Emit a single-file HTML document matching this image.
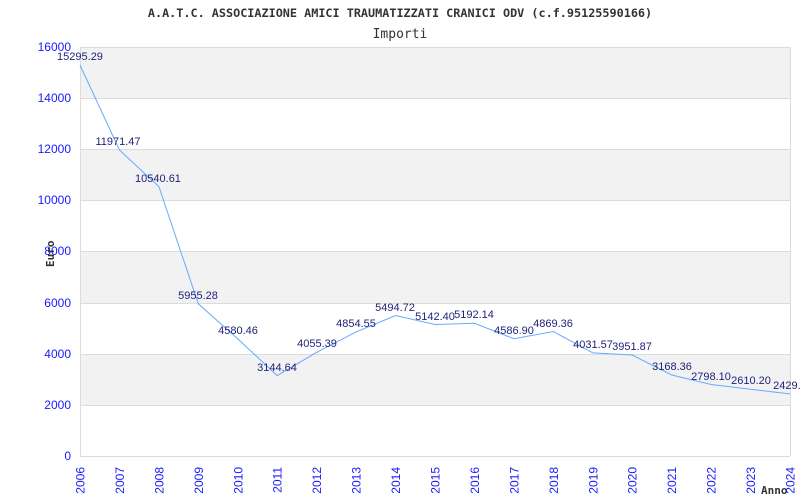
<!DOCTYPE html>
<html><head><meta charset="utf-8"><style>body{margin:0;background:#fff}svg{display:block}</style></head><body>
<svg width="800" height="500" xmlns="http://www.w3.org/2000/svg" font-family="Liberation Sans, Arial, sans-serif">
<rect width="800" height="500" fill="#fff"/>
<text x="400" y="17" text-anchor="middle" font-family="DejaVu Sans Mono, Liberation Mono, monospace" font-size="11.8" font-weight="bold" fill="#333">A.A.T.C. ASSOCIAZIONE AMICI TRAUMATIZZATI CRANICI ODV (c.f.95125590166)</text>
<text x="400" y="38" text-anchor="middle" font-family="DejaVu Sans Mono, Liberation Mono, monospace" font-size="13" fill="#333">Importi</text>
<g fill="#f2f2f2">
<rect x="80" y="47" width="710" height="51"/>
<rect x="80" y="149" width="710" height="51"/>
<rect x="80" y="251" width="710" height="52"/>
<rect x="80" y="354" width="710" height="51"/>
</g>
<g stroke="#dcdcdc" stroke-width="1">
<line x1="80" y1="47.5" x2="790" y2="47.5"/>
<line x1="80" y1="98.5" x2="790" y2="98.5"/>
<line x1="80" y1="149.5" x2="790" y2="149.5"/>
<line x1="80" y1="200.5" x2="790" y2="200.5"/>
<line x1="80" y1="251.5" x2="790" y2="251.5"/>
<line x1="80" y1="303.5" x2="790" y2="303.5"/>
<line x1="80" y1="354.5" x2="790" y2="354.5"/>
<line x1="80" y1="405.5" x2="790" y2="405.5"/>
<line x1="80" y1="456.5" x2="790" y2="456.5"/>
<line x1="80.5" y1="47" x2="80.5" y2="456"/>
<line x1="790.5" y1="47" x2="790.5" y2="456"/>
</g>
<g fill="#1a1aff" font-size="12" text-anchor="end">
<text x="71" y="51">16000</text><text x="71" y="102">14000</text><text x="71" y="153">12000</text><text x="71" y="204">10000</text><text x="71" y="255">8000</text><text x="71" y="307">6000</text><text x="71" y="358">4000</text><text x="71" y="409">2000</text><text x="71" y="460">0</text>
</g>
<text transform="translate(54,267) rotate(-90)" font-family="DejaVu Sans Mono, Liberation Mono, monospace" font-size="11" font-weight="bold" fill="#333">Euro</text>
<text x="761" y="494" font-family="DejaVu Sans Mono, Liberation Mono, monospace" font-size="11" font-weight="bold" fill="#333">Anno</text>
<polyline fill="none" stroke="#66aaff" stroke-width="1" points="80,65 119.4,150 158.9,186.6 198.3,303.8 237.8,338.9 277.2,375.6 316.7,352.3 356.1,331.9 395.6,315.5 435,324.5 474.4,323.3 513.9,338.7 553.3,331.5 592.8,352.9 632.2,355 671.7,375 711.1,384.5 750.6,389.3 790,393.9"/>
<g fill="#22227a" font-size="11" text-anchor="middle">
<text x="80" y="60">15295.29</text>
<text x="118" y="145">11971.47</text>
<text x="158" y="182">10540.61</text>
<text x="198" y="299">5955.28</text>
<text x="238" y="334">4580.46</text>
<text x="277" y="371">3144.64</text>
<text x="317" y="347">4055.39</text>
<text x="356" y="327">4854.55</text>
<text x="395" y="311">5494.72</text>
<text x="435" y="320">5142.40</text>
<text x="474" y="318">5192.14</text>
<text x="514" y="334">4586.90</text>
<text x="553" y="327">4869.36</text>
<text x="593" y="348">4031.57</text>
<text x="632" y="350">3951.87</text>
<text x="672" y="370">3168.36</text>
<text x="711" y="380">2798.10</text>
<text x="751" y="384">2610.20</text>
<text x="790" y="389">2429.2</text>
</g>
<g fill="#1a1aff" font-size="12" text-anchor="end">
<text transform="translate(84.5,467) rotate(-90)">2006</text>
<text transform="translate(123.9,467) rotate(-90)">2007</text>
<text transform="translate(163.4,467) rotate(-90)">2008</text>
<text transform="translate(202.8,467) rotate(-90)">2009</text>
<text transform="translate(242.3,467) rotate(-90)">2010</text>
<text transform="translate(281.7,467) rotate(-90)">2011</text>
<text transform="translate(321.2,467) rotate(-90)">2012</text>
<text transform="translate(360.6,467) rotate(-90)">2013</text>
<text transform="translate(400.1,467) rotate(-90)">2014</text>
<text transform="translate(439.5,467) rotate(-90)">2015</text>
<text transform="translate(478.9,467) rotate(-90)">2016</text>
<text transform="translate(518.4,467) rotate(-90)">2017</text>
<text transform="translate(557.8,467) rotate(-90)">2018</text>
<text transform="translate(597.3,467) rotate(-90)">2019</text>
<text transform="translate(636.7,467) rotate(-90)">2020</text>
<text transform="translate(676.2,467) rotate(-90)">2021</text>
<text transform="translate(715.6,467) rotate(-90)">2022</text>
<text transform="translate(755.1,467) rotate(-90)">2023</text>
<text transform="translate(794.5,467) rotate(-90)">2024</text>
</g>
</svg>
</body></html>
